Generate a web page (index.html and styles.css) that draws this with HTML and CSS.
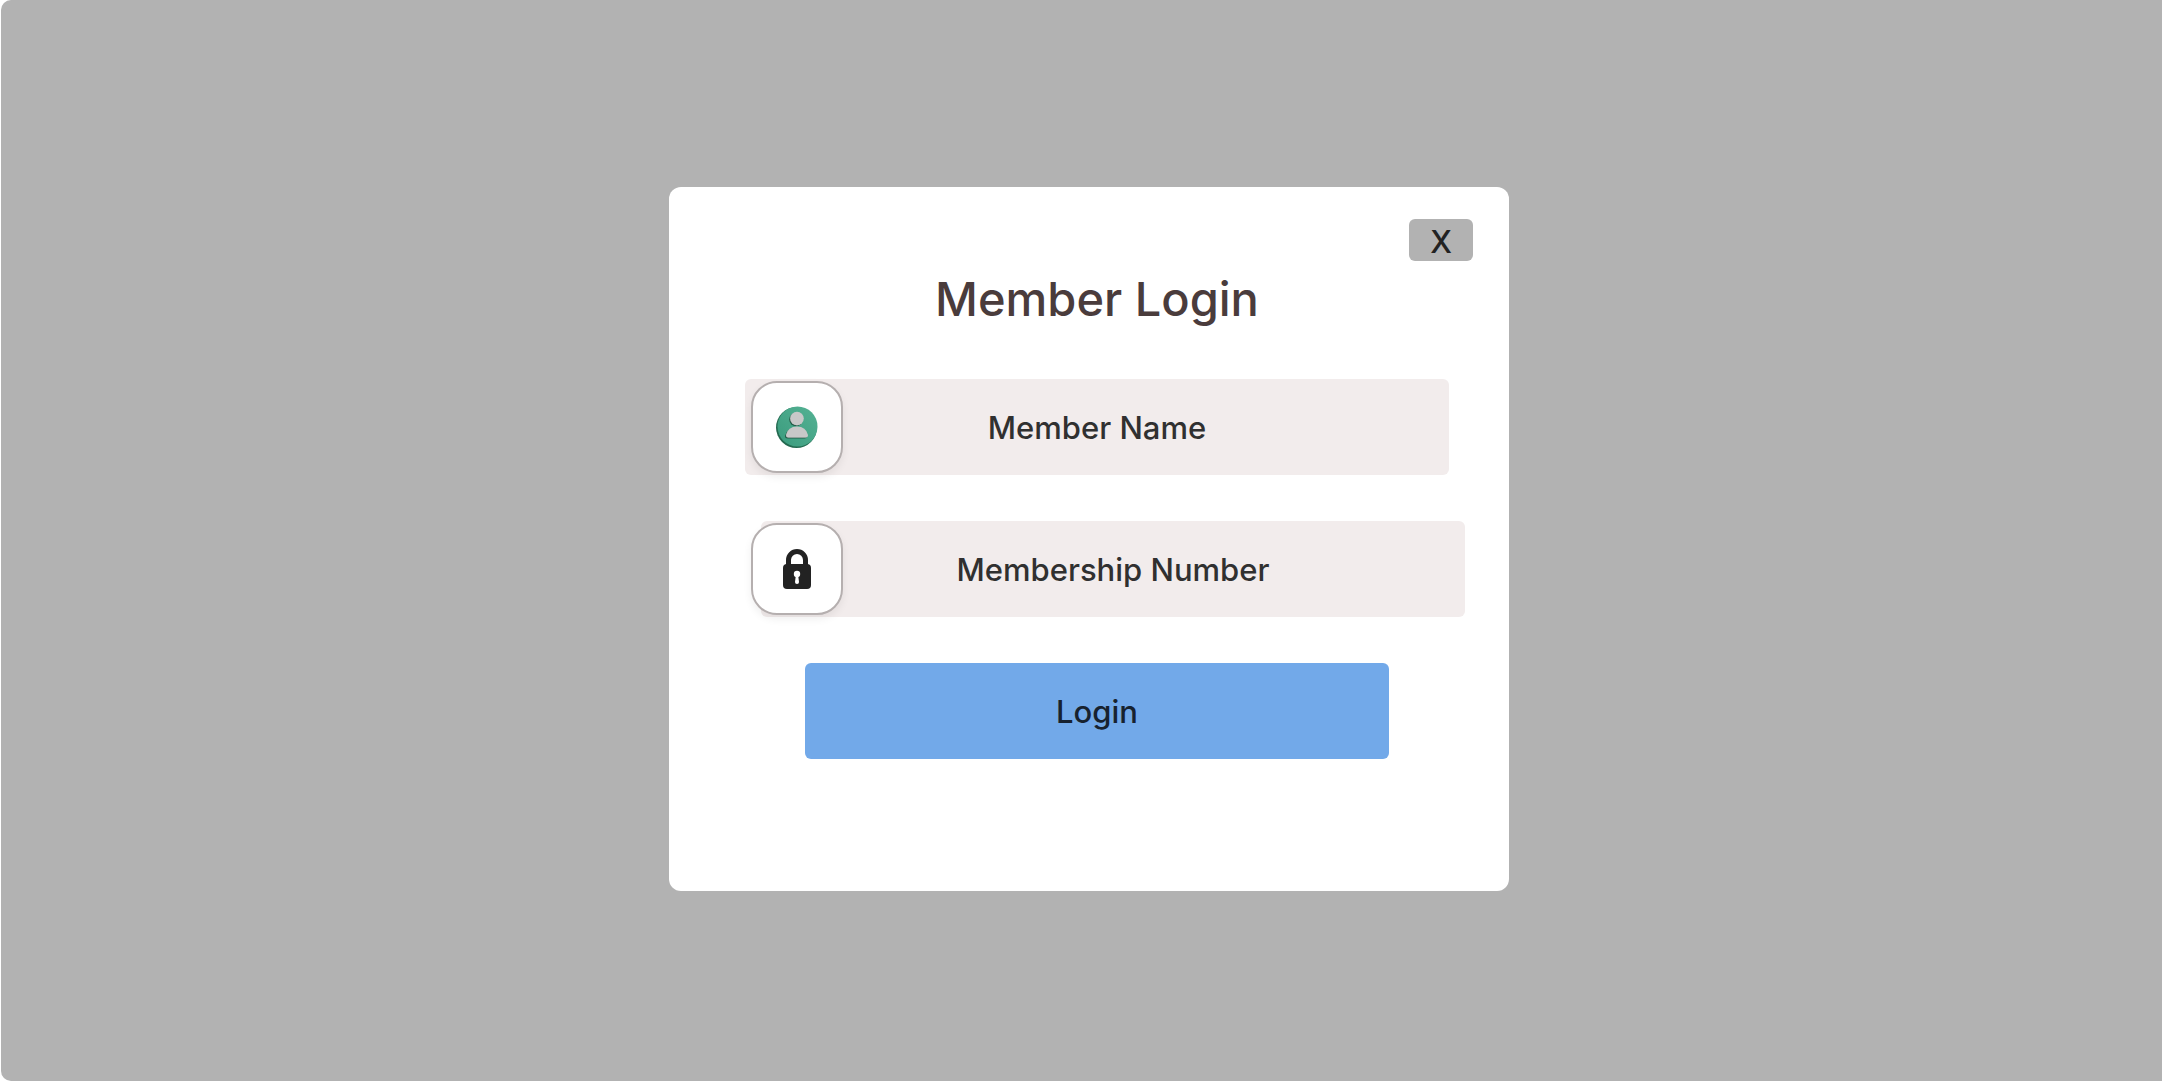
FILE: index.html
```html
<!DOCTYPE html>
<html lang="en">
<head>
<meta charset="utf-8">
<title>Member Login</title>
<link rel="stylesheet" href="styles.css">
</head>
<body>
<main class="backdrop">
  <form class="dialog">
    <button class="close" type="button" aria-label="Close">X</button>
    <h1 class="title">Member Login</h1>
    <div class="field">
      <label class="tile" for="name" aria-label="Member Name">
        <svg width="42" height="42" viewBox="0 0 42 42">
          <defs>
            <linearGradient id="disc" x1="0" y1="1" x2="1" y2="0"><stop offset="0" stop-color="#3a9b7d"/><stop offset="1" stop-color="#55b294"/></linearGradient>
            <filter id="soft" x="-20%" y="-20%" width="140%" height="140%"><feDropShadow dx="-1" dy="1" stdDeviation=".6" flood-color="#124a38" flood-opacity=".8"/></filter>
          </defs>
          <circle cx="20.500" cy="21.500" r="20.500" fill="#23694f"/>
          <circle cx="21.500" cy="20.500" r="20" fill="url(#disc)"/>
          <g fill="#c8c8c8" filter="url(#soft)">
            <circle cx="21" cy="12.500" r="6.800"/>
            <path d="M10 29q2-8.500 11-8.500t11 8.500q0 2.500-2.500 2.500h-17q-2.500 0-2.500-2.500z"/>
          </g>
        </svg>
      </label>
      <input class="input" id="name" type="text" placeholder="Member Name">
    </div>
    <div class="field field-number">
      <label class="tile" for="number" aria-label="Membership Number">
        <svg width="28" height="40" viewBox="0 0 28 40">
          <path d="M5.500 18V11a8.500 8.500 0 0 1 17 0v7" fill="none" stroke="#222" stroke-width="5"/>
          <rect y="15" width="28" height="25" rx="4" fill="#222"/>
          <circle cx="14" cy="25" r="3.200" fill="#fff"/>
          <path d="M13 25h2l1 8q0 2-2 2t-2-2z" fill="#fff"/>
        </svg>
      </label>
      <input class="input" id="number" type="text" placeholder="Membership Number">
    </div>
    <button class="submit" type="submit">Login</button>
  </form>
</main>
</body>
</html>
```
FILE: styles.css
```css
* { box-sizing: border-box; }
body { margin: 0; background: #fff; font-family: Inter, "Liberation Sans", sans-serif; }
.backdrop {
  min-height: 100vh;
  margin-left: 1px;
  padding: 187px 0 190px 15px;
  background: #b2b2b2;
  border-radius: 10px 0 0 10px;
}
.dialog {
  display: flex;
  flex-direction: column;
  align-items: center;
  width: 840px;
  max-width: 100%;
  margin: 0 auto;
  padding: 32px 44px 132px 60px;
  background: #fff;
  border-radius: 12px;
}
.close {
  align-self: flex-end;
  width: 64px;
  height: 42px;
  margin-right: -8px;
  padding: 4px 0 0;
  border: 0;
  border-radius: 6px;
  background: #b2b2b2;
  color: #222;
  font: 500 31px/38px Inter, sans-serif;
}
.title { margin: 8px 0 50px; color: #4a3c3c; font-size: 47px; font-weight: 500; line-height: 60px; }
.field { position: relative; width: 704px; max-width: 100%; margin-bottom: 46px; }
.field-number { left: 16px; }
.input {
  display: block;
  width: 100%;
  height: 96px;
  padding: 0 96px;
  border: 0;
  border-radius: 6px;
  background: #f2ecec;
  color: #303030;
  font: 500 31px/40px Inter, sans-serif;
  text-align: center;
}
.input::placeholder { color: #303030; opacity: 1; }
.tile {
  position: absolute;
  top: 2px;
  left: 6px;
  display: grid;
  place-items: center;
  width: 92px;
  height: 92px;
  border: 2px solid #b5afaf;
  border-radius: 26px;
  background: #fff;
  box-shadow: 0 4px 8px #0001;
}
.field-number .tile { left: -10px; }
.submit {
  width: 584px;
  max-width: 100%;
  height: 96px;
  padding: 2px 0 0;
  border: 0;
  border-radius: 6px;
  background: #72a9e9;
  color: #17222f;
  font: 500 31px/40px Inter, sans-serif;
}
```
